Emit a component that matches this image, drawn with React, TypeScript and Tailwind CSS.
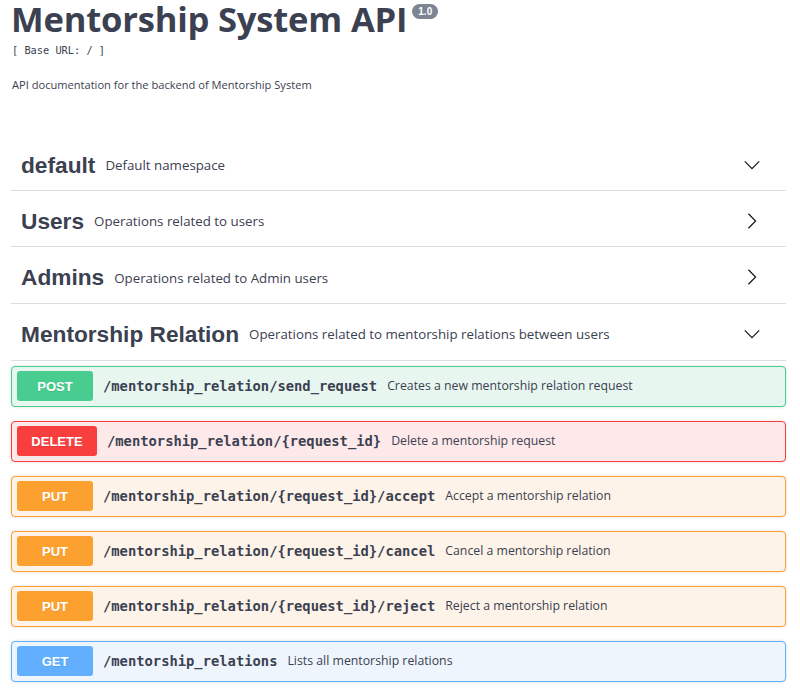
import React from "react";

const Chevron = ({ open }: { open: boolean }) =>
  open ? (
    <svg width="18" height="18" viewBox="0 0 20 20" className="text-[#1a1a1a]">
      <path d="M2 6 L10 14 L18 6" fill="none" stroke="currentColor" strokeWidth="1.4" />
    </svg>
  ) : (
    <svg width="18" height="18" viewBox="0 0 20 20" className="text-[#1a1a1a]">
      <path d="M6 2 L14 10 L6 18" fill="none" stroke="currentColor" strokeWidth="1.4" />
    </svg>
  );

const Tag = ({ name, desc, open, first }: { name: string; desc: string; open: boolean; first?: boolean }) => (
  <div
    className={`flex items-center h-[56.7px] border-b border-[#dcdde1] pl-[10px] pr-[25px] ${first ? "pt-[6px]" : "pt-[4px]"}`}
  >
    <span className="text-[22.7px] font-bold text-[#3b4151] font-['Liberation_Sans',sans-serif]">{name}</span>
    <span className="ml-[10px] text-[13.3px] text-[#3b4151] font-['Open_Sans',sans-serif] mt-[3px]">{desc}</span>
    <span className="ml-auto flex items-center">
      <Chevron open={open} />
    </span>
  </div>
);

type Op = { m: string; path: string; desc: string };

const styles: Record<string, { wrap: string; badge: string }> = {
  POST: { wrap: "bg-[#e8f6f0] border-[#49cc90]", badge: "bg-[#49cc90] w-[76px]" },
  DELETE: { wrap: "bg-[#fde9e9] border-[#f93e3e]", badge: "bg-[#f93e3e] w-[80px]" },
  PUT: { wrap: "bg-[#fef3e8] border-[#fca130]", badge: "bg-[#fca130] w-[76px]" },
  GET: { wrap: "bg-[#eef5fd] border-[#61affe]", badge: "bg-[#61affe] w-[76px]" },
};

const ops: Op[] = [
  { m: "POST", path: "/mentorship_relation/send_request", desc: "Creates a new mentorship relation request" },
  { m: "DELETE", path: "/mentorship_relation/{request_id}", desc: "Delete a mentorship request" },
  { m: "PUT", path: "/mentorship_relation/{request_id}/accept", desc: "Accept a mentorship relation" },
  { m: "PUT", path: "/mentorship_relation/{request_id}/cancel", desc: "Cancel a mentorship relation" },
  { m: "PUT", path: "/mentorship_relation/{request_id}/reject", desc: "Reject a mentorship relation" },
  { m: "GET", path: "/mentorship_relations", desc: "Lists all mentorship relations" },
];

export default function App() {
  return (
    <div className="bg-white min-h-[693px] pl-[11px] pr-[14px] text-[#3b4151] font-['Open_Sans',sans-serif] overflow-hidden">
      <div className="flex items-start">
        <h1 className="text-[34.6px] leading-[38px] font-bold tracking-[-0.2px] mt-[0px]">Mentorship System API</h1>
        <span className="ml-[5px] mt-[4px] bg-[#7d8492] text-white text-[10px] font-bold rounded-full px-[6px] h-[15px] flex items-center font-['Liberation_Sans',sans-serif]">
          1.0
        </span>
      </div>
      <div className="mt-[5px] text-[10.3px] leading-[14px] font-['DejaVu_Sans_Mono',monospace] pl-[1px]">[ Base URL: / ]</div>
      <div className="mt-[21px] text-[11.1px] leading-[14px] pl-[1px]">API documentation for the backend of Mentorship System</div>

      <div className="mt-[42px]">
        <Tag name="default" desc="Default namespace" open={true} first />
        <Tag name="Users" desc="Operations related to users" open={false} />
        <Tag name="Admins" desc="Operations related to Admin users" open={false} />
        <Tag name="Mentorship Relation" desc="Operations related to mentorship relations between users" open={true} />
      </div>

      <div className="mt-[5px] flex flex-col gap-[14px]">
        {ops.map((o, i) => (
          <div
            key={i}
            className={`flex items-center h-[41px] border rounded-[4px] px-[5px] shadow-[0_0_3px_rgba(0,0,0,0.15)] ${styles[o.m].wrap}`}
          >
            <span
              className={`${styles[o.m].badge} h-[30px] rounded-[3px] flex items-center justify-center text-white text-[13px] font-bold font-['Liberation_Sans',sans-serif] [text-shadow:0_1px_0_rgba(0,0,0,0.1)]`}
            >
              {o.m}
            </span>
            <span className="ml-[10px] text-[13.8px] font-bold font-['DejaVu_Sans_Mono',monospace] text-[#3b4151]">{o.path}</span>
            <span className="ml-[10px] text-[12.3px] text-[#3b4151]">{o.desc}</span>
          </div>
        ))}
      </div>
    </div>
  );
}
